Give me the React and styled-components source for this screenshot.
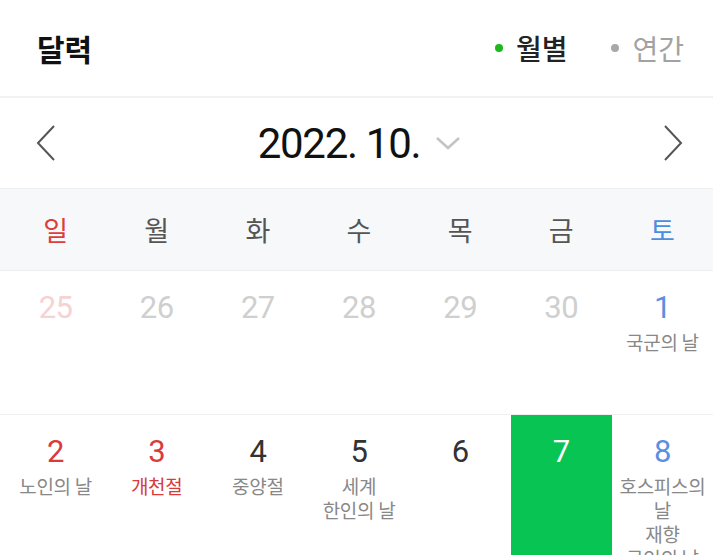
import React from "react";
import styled, { createGlobalStyle } from "styled-components";

const Global = createGlobalStyle`
  html, body { margin: 0; padding: 0; background: #fff; overflow: hidden; }
  body { font-family: Roboto, "Noto Sans CJK KR", sans-serif; }
`;

const Page = styled.div`
  width: 713px;
  height: 555px;
  overflow: hidden;
  background: #fff;
`;

const Header = styled.header`
  height: 96px;
  display: flex;
  align-items: center;
  justify-content: space-between;
  padding: 0 29px 0 37px;
  border-bottom: 2px solid #f0f1f3;
`;

const Title = styled.h1`
  margin: 0;
  font-size: 30px;
  font-weight: 700;
  color: #111;
  font-family: "Noto Sans CJK KR", sans-serif;
`;

const Tabs = styled.div`
  display: flex;
  align-items: center;
  gap: 44px;
`;

const Tab = styled.span`
  display: flex;
  align-items: center;
  gap: 13px;
  font-size: 28px;
  font-family: "Noto Sans CJK KR", sans-serif;
  font-weight: ${(p) => (p.$active ? 500 : 400)};
  color: ${(p) => (p.$active ? "#222" : "#a2a2a2")};
  &::before {
    content: "";
    width: 8px;
    height: 8px;
    border-radius: 50%;
    background: ${(p) => (p.$active ? "#1cb91c" : "#a8a8a8")};
  }
`;

const MonthNav = styled.div`
  height: 90px;
  display: flex;
  align-items: center;
  justify-content: space-between;
  padding: 0 28px 0 34px;
`;

const NavButton = styled.button`
  border: 0;
  background: none;
  padding: 0;
  width: 24px;
  height: 40px;
  display: flex;
  align-items: center;
  justify-content: center;
`;

const MonthLabel = styled.div`
  display: flex;
  align-items: center;
  gap: 15px;
  font-size: 42px;
  color: #111;
  font-family: Roboto, sans-serif;
  letter-spacing: -1.3px;
`;

const WeekHeader = styled.div`
  display: grid;
  grid-template-columns: repeat(7, 1fr);
  height: 81px;
  align-items: center;
  background: #f7f8fa;
  border-top: 1px solid #eceef0;
  border-bottom: 1px solid #eceef0;
  padding-left: 5px;
`;

const WeekDay = styled.div`
  text-align: center;
  font-size: 27px;
  font-family: "Noto Sans CJK KR", sans-serif;
  color: ${(p) => p.$color || "#555"};
`;

const Week = styled.div`
  display: grid;
  grid-template-columns: repeat(7, 1fr);
  min-height: 143px;
  border-bottom: 1px solid #eeeff1;
  padding-left: 5px;
`;

const Day = styled.div`
  display: flex;
  flex-direction: column;
  align-items: center;
  padding-top: 19px;
  background: ${(p) => (p.$selected ? "#08c452" : "transparent")};
  min-height: ${(p) => (p.$tall ? "200px" : "0")};
`;

const Num = styled.div`
  font-size: 31px;
  line-height: 36px;
  font-family: Roboto, sans-serif;
  letter-spacing: -0.5px;
  color: ${(p) => p.$color};
`;

const Label = styled.div`
  margin-top: 4px;
  font-size: 19px;
  line-height: 24px;
  text-align: center;
  font-family: "Noto Sans CJK KR", sans-serif;
  color: ${(p) => p.$color || "#888"};
  white-space: pre-line;
  word-break: keep-all;
  letter-spacing: -0.3px;
`;

const RED = "#d93a3a";
const BLUE = "#5a8fe2";
const DARK = "#333";

const Chevron = ({ dir }) => (
  <svg width="20" height="38" viewBox="0 0 20 38" fill="none">
    <path
      d={dir === "left" ? "M18 2 L2 19 L18 36" : "M2 2 L18 19 L2 36"}
      stroke="#555"
      strokeWidth="2"
    />
  </svg>
);

const weeks = [
  [
    { n: 25, c: "#f6d3d3" },
    { n: 26, c: "#cfcfcf" },
    { n: 27, c: "#cfcfcf" },
    { n: 28, c: "#cfcfcf" },
    { n: 29, c: "#cfcfcf" },
    { n: 30, c: "#cfcfcf" },
    { n: 1, c: BLUE, l: "국군의 날" },
  ],
  [
    { n: 2, c: RED, l: "노인의 날" },
    { n: 3, c: RED, l: "개천절", lc: RED },
    { n: 4, c: DARK, l: "중양절" },
    { n: 5, c: DARK, l: "세계\n한인의 날" },
    { n: 6, c: DARK },
    { n: 7, c: "#fff", sel: true },
    { n: 8, c: BLUE, l: "호스피스의\n날\n재향\n군인의 날" },
  ],
];

export default function App() {
  return (
    <Page>
      <Global />
      <Header>
        <Title>달력</Title>
        <Tabs>
          <Tab $active>월별</Tab>
          <Tab>연간</Tab>
        </Tabs>
      </Header>
      <MonthNav>
        <NavButton aria-label="이전 달">
          <Chevron dir="left" />
        </NavButton>
        <MonthLabel>
          2022. 10.
          <svg width="26" height="16" viewBox="0 0 26 16" fill="none">
            <path d="M2 3 L13 13 L24 3" stroke="#c4c4c4" strokeWidth="2.6" />
          </svg>
        </MonthLabel>
        <NavButton aria-label="다음 달">
          <Chevron dir="right" />
        </NavButton>
      </MonthNav>
      <WeekHeader>
        <WeekDay $color="#e03c3c">일</WeekDay>
        <WeekDay>월</WeekDay>
        <WeekDay>화</WeekDay>
        <WeekDay>수</WeekDay>
        <WeekDay>목</WeekDay>
        <WeekDay>금</WeekDay>
        <WeekDay $color="#4b8de0">토</WeekDay>
      </WeekHeader>
      {weeks.map((w, i) => (
        <Week key={i}>
          {w.map((d) => (
            <Day key={d.n} $selected={d.sel} $tall={i > 0}>
              <Num $color={d.c}>{d.n}</Num>
              {d.l && <Label $color={d.lc}>{d.l}</Label>}
            </Day>
          ))}
        </Week>
      ))}
    </Page>
  );
}
